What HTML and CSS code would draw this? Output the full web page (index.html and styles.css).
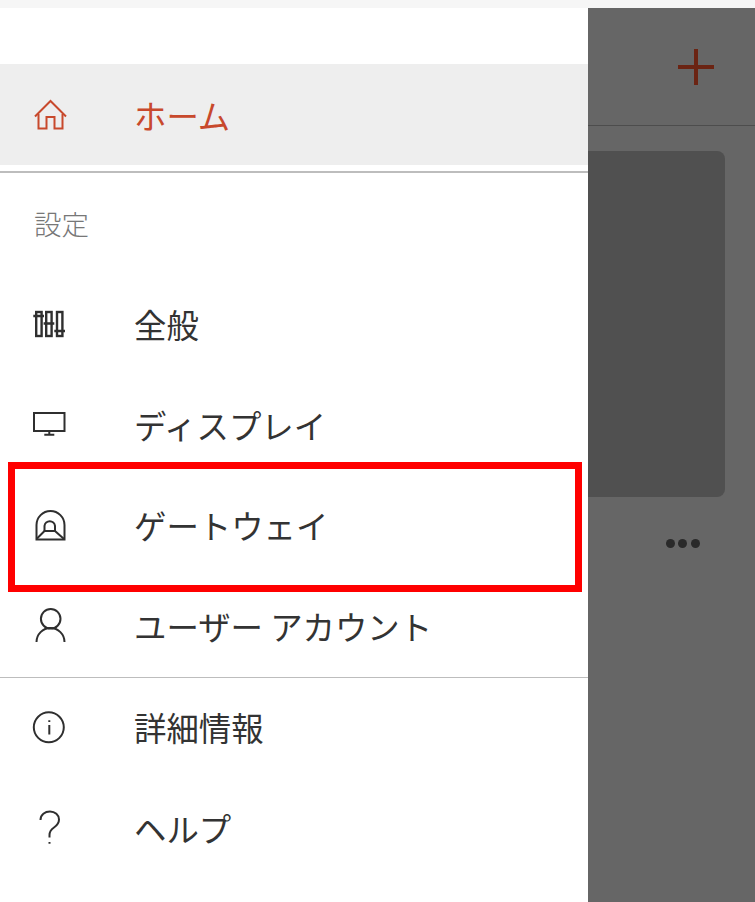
FILE: index.html
```html
<!DOCTYPE html>
<html lang="ja">
<head>
  <meta charset="UTF-8" />
  <meta name="viewport" content="width=device-width, initial-scale=1.0" />
  <title>設定</title>
  <link rel="stylesheet" href="styles.css">
</head>
<body>

  <div class="status-strip"></div>

  <div class="screen">
    <nav class="drawer">
      <div class="drawer-top"></div>

      <a class="row row-active">
        <svg class="icon" viewBox="0 0 40 40">
          <path d="M5 22.5 L20.5 7 L36 22.5" />
          <path d="M8.5 20 V34.5 H16.5 V23 H24.5 V34.5 H32.5 V20" />
        </svg>
        <span>ホーム</span>
      </a>

      <div class="divider divider-thick"></div>
      <div class="section-label">設定</div>

      <a class="row">
        <svg class="icon icon-sliders" viewBox="0 0 40 40">
          <rect x="6.2" y="7" width="5.4" height="24" />
          <rect x="16.2" y="7" width="5.4" height="24" />
          <rect x="27" y="7" width="5.4" height="24" />
          <path d="M3.3 11 H14 M13.6 18.5 H24.3 M24.3 26 H35" />
        </svg>
        <span>全般</span>
      </a>
      <a class="row">
        <svg class="icon" viewBox="0 0 40 40">
          <rect x="4" y="8" width="30.5" height="18" />
          <path d="M19.3 26 V29.5 M14.3 29.7 H24.3" />
        </svg>
        <span>ディスプレイ</span>
      </a>
      <a class="row">
        <svg class="icon" viewBox="0 0 40 40">
          <path d="M6.5 33.5 V19 A14 14 0 0 1 34.5 19 V33.5 Z" />
          <path d="M14.5 25 V19.8 A5.3 5.3 0 0 1 25 19.8 V25 Z" />
          <path d="M14.5 25 L6.5 33 M25 25 L34 33" />
        </svg>
        <span>ゲートウェイ</span>
      </a>
      <a class="row">
        <svg class="icon" viewBox="0 0 40 40">
          <circle cx="20.7" cy="12.8" r="9.8" />
          <path d="M6.5 36 A14 14 0 0 1 34.5 36" />
        </svg>
        <span>ユーザー アカウント</span>
      </a>

      <div class="divider"></div>

      <a class="row">
        <svg class="icon" viewBox="0 0 40 40">
          <circle cx="18.8" cy="19.3" r="15" />
          <path d="M19.3 17 V26.5 M19.3 12.2 V14" />
        </svg>
        <span>詳細情報</span>
      </a>
      <a class="row">
        <svg class="icon" viewBox="0 0 40 40">
          <path d="M10.5 12 C10.5 6.5 15 3.5 20 3.5 C25 3.5 29 7 29 11.5 C29 15 27 17.5 24 19.5 C21 21.5 19.5 23 19.5 27 V29.5 M19.5 34 V35.8" />
        </svg>
        <span>ヘルプ</span>
      </a>
    </nav>

    <div class="backdrop">
      <div class="backdrop-header">
        <svg class="plus" viewBox="0 0 36 36">
          <path d="M0 18 H36 M18 0 V36" />
        </svg>
      </div>
      <div class="backdrop-card"></div>
      <div class="dots">
        <i></i><i></i><i></i>
      </div>
    </div>
  </div>

  <!-- 赤枠 -->
  <div class="highlight"></div>

</body>
</html>
```

FILE: styles.css
```css
* {
  box-sizing: border-box;
}

html, body {
  height: 100%;
}

body {
  position: relative;
  margin: 0;
  overflow: hidden;
  background: #fff;
  font-family: "Noto Sans CJK JP", "Noto Sans", sans-serif;
  font-weight: 400;
  color: #333333;
}

.status-strip {
  height: 8px;
  background: #f6f6f6;
}

.screen {
  display: flex;
  height: 894px;
}

.drawer {
  width: 588px;
  flex-shrink: 0;
  background: #fff;
}

.drawer-top {
  height: 56px;
}

.row {
  display: flex;
  align-items: center;
  height: 100.5px;
  padding-left: 30px;
  font-size: 32.4px;
}

.row span {
  margin-left: 64px;
  padding-bottom: 2px;
  white-space: nowrap;
}

.row-active {
  background: #eeeeee;
  color: #c8492c;
}

.row-active span {
  padding-bottom: 0;
  padding-top: 1px;
}

.icon {
  width: 40px;
  height: 40px;
  flex-shrink: 0;
  fill: none;
  stroke: #2f2f2f;
  stroke-width: 2;
}

.icon-sliders {
  stroke-width: 2.4;
}

.row-active .icon {
  stroke: #c8492c;
}

.divider {
  height: 1px;
  background: #bdbdbd;
}

.divider-thick {
  height: 2px;
  margin-top: 6px;
}

.section-label {
  display: flex;
  align-items: center;
  height: 102px;
  padding-left: 34px;
  padding-bottom: 2px;
  font-size: 27.5px;
  font-weight: 300;
  color: #777777;
}

.backdrop {
  flex: 1;
  background: #666666;
}

.backdrop-header {
  display: flex;
  align-items: center;
  justify-content: flex-end;
  height: 118px;
  padding-right: 41px;
  border-bottom: 1px solid #4d4d4d;
}

.plus {
  width: 36px;
  height: 36px;
  fill: none;
  stroke: #6b2413;
  stroke-width: 4;
}

.backdrop-card {
  height: 346px;
  margin: 25px 30px 0 0;
  background: #505050;
  border-radius: 0 8px 8px 0;
}

.dots {
  display: flex;
  justify-content: flex-end;
  gap: 3.7px;
  margin-top: 42px;
  padding-right: 55px;
}

.dots i {
  width: 9px;
  height: 9px;
  border-radius: 50%;
  background: #2a2a2a;
}

.highlight {
  position: absolute;
  left: 8px;
  top: 462px;
  width: 574px;
  height: 130px;
  border: 7px solid #ff0000;
}
```
